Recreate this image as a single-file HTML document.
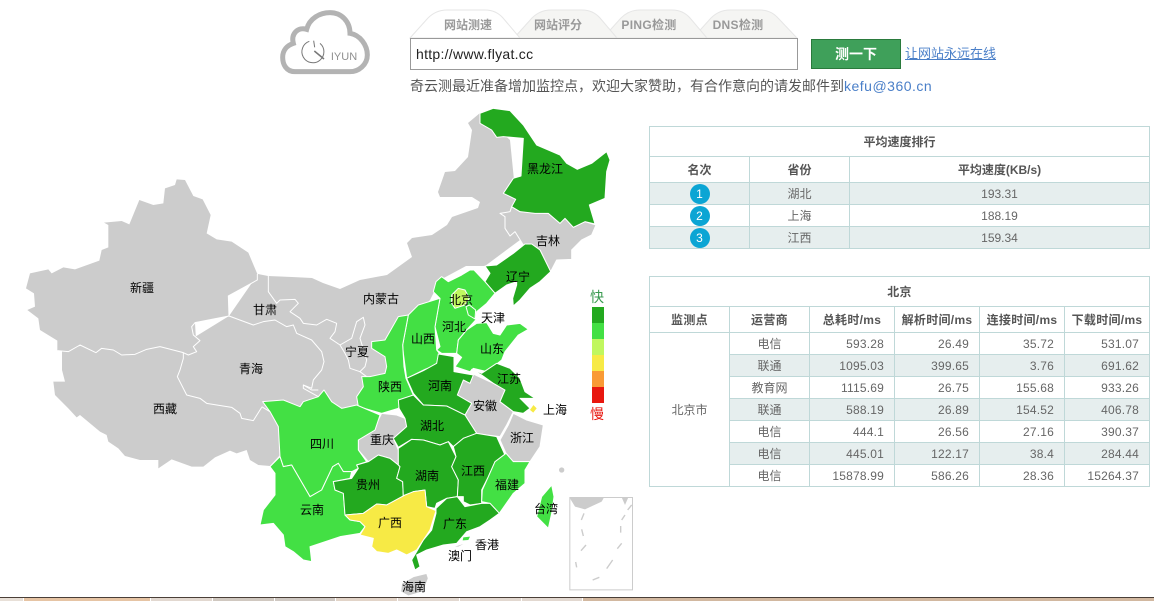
<!DOCTYPE html>
<html><head><meta charset="utf-8"><title>奇云测</title>
<style>
html,body{margin:0;padding:0;background:#fff;width:1154px;height:601px;overflow:hidden;position:relative}
body,td,th,div,a,span{font-family:"Liberation Sans","Noto Sans CJK SC",sans-serif}
.a{position:absolute;white-space:nowrap}
table{position:absolute;left:649px;border-collapse:collapse;table-layout:fixed;width:500px;font-size:12px;color:#666;text-align:center}
td,th{border:1px solid #bfd8d8;padding:0;line-height:16px;overflow:hidden;white-space:nowrap}
th{color:#555;font-weight:bold}
table.t2 th{letter-spacing:.3px}
tr.h30{height:30px}tr.h26{height:26px}tr.r{height:22px}
.s td.c,tr.s td{background:#e6eeee}
td.n{text-align:right;padding-right:10px;letter-spacing:.2px}
td.w{background:#fff!important}
.b{display:block;margin:0 auto;width:20px;height:20px;border-radius:50%;background:#0ba5d4;color:#fff;line-height:20px;font-size:12px}
svg{position:absolute;left:0;top:0}
svg polygon,svg polyline,svg path{vector-effect:non-scaling-stroke}
.p polygon{stroke:#fff;stroke-width:1;stroke-linejoin:round}
.l polyline{fill:none;stroke:#fff;stroke-width:1;stroke-linejoin:round}
.g{fill:#ccc}.d{fill:#23a91f}.m{fill:#43e044}.y{fill:#f7ea45}
text{font-family:"Liberation Sans","Noto Sans CJK SC",sans-serif;font-size:12px;fill:#000;text-anchor:middle}
</style></head><body>

<svg width="1154" height="601" viewBox="0 0 1154 601">
<!-- logo -->
<g transform="translate(270 0) scale(.33333)">
<path d="M75,215 C48,215 38,192 38,172 C38,150 52,136 70,130 C62,100 85,80 110,88 C118,55 150,38 180,38 C215,38 240,65 240,100 C270,105 292,135 292,165 C292,195 265,215 240,215 Z" fill="none" stroke="#b3b3b3" stroke-width="5"/>
<path d="M118,124 A33,33 0 1 0 150,130" fill="none" stroke="#777" stroke-width="1"/>
<path d="M131,122 L134,142" fill="none" stroke="#777" stroke-width="1"/>
<path d="M133,153 L162,177" stroke="#777" stroke-width="1.5" fill="none"/>
</g>
<text x="344" y="60" style="font-size:11px;fill:#8f8f8f">IYUN</text>

<!-- tabs -->
<g stroke="#e6e6e6" stroke-width="1" fill="#f5f5f3">
<path d="M693,38 L711,18 Q719,10 730,10 L760,10 Q771,10 778,18 L797,38 Z"/>
<path d="M603,38 L621,18 Q629,10 640,10 L672,10 Q683,10 690,18 L707,38 Z"/>
<path d="M514,38 L532,18 Q540,10 551,10 L582,10 Q593,10 600,18 L617,38 Z"/>
<path d="M410,38 L428,18 Q436,10 447,10 L485,10 Q496,10 503,18 L520,38 Z" fill="#fff"/>
</g>
<g style="font-weight:bold">
<text x="468" y="29" style="font-weight:bold;fill:#999">网站测速</text>
<text x="558" y="29" style="font-weight:bold;fill:#999">网站评分</text>
<text x="649" y="29" style="font-weight:bold;fill:#999;letter-spacing:.3px">PING检测</text>
<text x="738" y="29" style="font-weight:bold;fill:#999;letter-spacing:.3px">DNS检测</text>
</g>

<!-- base gray -->
<g class="p">
<polygon class="g" points="258,274 268,276 292,277 312,278 323,283 340,289 360,280 387,275 412,257 407,243 412,238 432,235 447,225 452,217 478,208 480,202 472,197 440,197 438,192 445,172 455,171 468,157 472,130 468,123 480,113 510,140 520,240 485,266 466,266 440,280 430,300 400,330 400,390 340,440 290,440 262,410 195,400 190,340 229,316" style="stroke:none"/>
<g transform="translate(40 380) scale(.33333)">
<polygon class="g" style="stroke:none" points="40,5 45,45 85,85 110,112 120,105 180,155 200,165 205,185 235,205 255,228 300,240 355,240 355,265 395,238 455,260 490,260 525,232 570,212 590,220 620,210 630,240 655,255 690,258 720,225 740,200 690,60 600,-120 200,-120 66,-90 66,-30 75,5"/>
</g>
<g transform="translate(20 170) scale(.33333)">
<polygon class="g" style="stroke:none" points="470,28 495,30 520,78 548,88 572,135 560,190 590,208 635,215 685,248 712,312 712,330 625,378 627,438 525,458 530,545 490,548 420,530 380,538 345,553 305,555 280,540 245,535 228,548 180,525 145,545 112,542 112,512 60,480 55,445 22,420 45,410 42,370 18,355 30,310 85,298 95,310 130,292 165,298 238,272 245,240 265,232 265,165 252,158 305,153 328,163 358,90 400,105 430,100 435,55 465,45"/>
</g>
</g>

<!-- west borders -->
<g class="l">
<g transform="translate(20 170) scale(.33333)">
<polyline points="112,542 145,545 180,525 228,548 245,535 280,540 305,555 345,553 380,538 420,530 490,548 505,555 530,545 520,530 540,512 520,495 515,470 525,458 627,438 625,378 712,330 712,312"/>
<polyline points="490,548 490,565 480,600 472,620 500,675 540,685 560,700 635,712 660,730 665,745 700,752 725,712"/>
<polyline points="627,438 700,465 730,455 765,450 800,470 820,465 830,490 875,510 905,545 912,575 905,600 880,630 875,655 850,645 850,655 895,680"/>
</g>
<g transform="translate(220 260) scale(.33333)">
<polyline points="145,47 145,95 170,130 180,120 225,118 235,130 210,155 240,175 250,190 290,195 320,178 350,190 345,215 330,235 360,255 395,235 410,185 430,172 435,195 420,235 440,300 435,320 420,335 390,325 385,300 375,280 360,255"/>
<polyline points="420,335 440,350 445,385"/>
</g>
<g transform="translate(250 350) scale(.33333)">
<polyline points="35,170 60,185"/>
<polyline points="160,105 185,120 205,120"/>
</g>
</g>

<!-- north east -->
<g class="p" transform="translate(340 100) scale(.33333)">
<polygon class="g" points="515,320 540,335 625,340 660,370 675,355 700,382 735,365 768,375 755,405 725,420 695,450 695,478 650,480 632,515 600,450 575,432 550,435 525,395 510,408 495,385 495,350 480,340 510,335"/>
<polygon class="d" points="420,40 460,25 510,32 550,75 590,135 660,165 680,190 712,208 755,190 800,155 810,180 800,215 795,295 748,315 765,372 735,365 700,382 675,355 660,370 625,340 585,340 540,335 515,320 527,298 490,280 520,235 543,228 550,115 490,110 470,112 455,90 420,70"/>
<polygon class="d" points="555,432 575,432 600,450 632,515 600,545 570,565 540,600 520,618 518,595 530,555 530,545 500,555 465,580 435,545 450,520 435,498 470,495 520,460"/>
</g>

<!-- north china -->
<g class="p" transform="translate(330 270) scale(.33333)">
<polygon class="m" points="318,35 335,20 355,35 395,15 420,0 432,0 465,35 495,70 470,100 440,125 437,150 410,180 385,210 380,250 335,250 320,240 330,230 315,170 330,85 310,65"/>
<polygon class="m" points="330,85 315,170 320,240 328,250 320,285 285,298 230,325 220,250 218,225 235,135 265,105"/>
<polygon class="m" points="235,135 218,225 222,290 228,325 250,375 215,395 205,415 155,430 85,410 80,380 100,350 95,320 120,320 165,310 170,290 165,260 125,235 125,215 165,210 205,140"/>
<polygon class="m" points="380,250 385,210 410,180 440,160 470,158 490,190 510,195 530,165 570,160 595,178 565,195 545,220 525,245 515,270 490,290 470,305 430,295 420,305 375,290 395,262"/>
<polygon class="m" points="408,110 415,135 435,147 437,120 418,105"/>
<polygon points="365,100 365,75 385,55 405,60 418,85 405,105 375,115" style="fill:#c0f75f"/>
</g>

<!-- south -->
<g class="p" transform="translate(250 350) scale(.33333)">
<polygon class="g" points="665,70 730,100 765,120 750,155 790,185 770,225 750,260 710,255 680,250 645,195 665,160 622,135 640,90 660,100"/>
<polygon class="g" points="790,190 830,210 880,225 870,290 840,335 790,335 768,310 750,270 775,225"/>
<polygon class="g" points="395,190 440,195 465,205 470,230 430,265 445,300 445,345 420,325 385,315 355,335 325,300 325,270 375,240 385,210"/>
<polygon class="m" points="38,155 100,150 150,170 160,155 205,140 222,120 245,155 275,175 320,165 390,195 375,240 325,270 325,300 350,335 320,345 325,355 305,365 280,365 265,340 248,350 215,420 180,440 125,345 100,350 90,320 85,230 60,185"/>
<polygon class="m" points="60,350 90,320 100,350 125,345 180,440 215,420 248,350 265,340 280,365 305,365 300,385 250,395 255,420 280,430 285,495 300,510 330,515 345,530 330,550 270,560 225,575 180,590 185,635 160,630 130,605 105,590 100,555 70,520 30,525 40,480 75,435 75,370"/>
<polygon class="d" points="250,395 305,385 325,355 320,345 355,335 385,315 420,325 445,345 450,350 440,385 458,395 460,440 410,465 380,462 340,490 285,495 280,430 255,420"/>
<polygon class="d" points="565,12 612,20 612,65 670,75 660,100 640,90 622,135 665,160 645,195 605,180 590,168 520,165 490,130 470,85 520,62 560,40"/>
<polygon class="d" points="445,150 490,135 520,165 590,168 645,195 680,250 640,265 610,290 595,275 570,285 520,270 485,268 445,292 430,265 470,230 465,205 447,175"/>
<polygon class="d" points="445,295 485,268 520,270 570,285 595,275 618,320 605,350 625,390 622,440 590,445 560,460 555,475 530,470 525,420 490,425 460,440 458,395 440,385 450,350 445,345"/>
<polygon class="d" points="610,290 640,265 680,250 710,255 740,260 768,322 735,335 715,380 695,420 695,460 660,465 640,455 640,440 622,440 625,390 605,350 618,320"/>
<polygon class="m" points="768,310 790,335 840,335 825,360 825,400 790,430 748,490 720,460 695,455 697,420 715,380 735,335"/>
<polygon class="d" points="665,58 695,70 740,40 780,55 810,85 825,125 855,145 810,145 840,175 820,190 790,185 750,155 765,120 730,100 695,75"/>
<polygon class="y" points="850,163 862,175 850,190 838,180"/>
<polygon class="d" points="558,475 590,445 622,440 645,470 695,460 720,460 748,490 720,510 690,530 650,545 620,580 580,585 530,600 500,615 510,650 495,660 485,630 500,605 520,570 545,540 558,490"/>
<polygon class="y" points="285,495 340,490 380,462 410,465 465,435 490,425 525,420 530,470 558,482 540,540 520,570 500,600 470,615 440,600 415,610 380,605 365,590 370,565 330,555 345,530 330,515 300,510"/>
<polygon class="m" points="905,405 912,440 905,490 895,535 860,500 875,440"/>
<polygon class="g" points="490,680 530,670 535,685 520,725 475,738 452,725 455,700"/>
<polygon class="m" style="stroke:none" points="640,562 660,560 655,570 638,571"/>
<polygon class="g" style="stroke:none" points="615,590 640,582 625,590"/>
<circle cx="935" cy="360" r="8" fill="#ccc"/>
</g>

<!-- legend -->
<rect x="592" y="307" width="12" height="16" fill="#23a91f"/>
<rect x="592" y="323" width="12" height="16" fill="#43e044"/>
<rect x="592" y="339" width="12" height="16" fill="#c0f75f"/>
<rect x="592" y="355" width="12" height="16" fill="#f7ea45"/>
<rect x="592" y="371" width="12" height="16" fill="#f99a35"/>
<rect x="592" y="387" width="12" height="16" fill="#e8170f"/>
<text x="597" y="302" style="font-size:14px;fill:#3a9a50">快</text>
<text x="597" y="419" style="font-size:14px;fill:#e8170f">慢</text>

<!-- inset -->
<g transform="translate(560 280) scale(.33333)">
<polygon points="30,655 45,680 75,688 125,665 132,652 30,652" fill="#ccc"/>
<polygon points="185,652 205,652 195,675" fill="#ccc"/>
<rect x="29.5" y="652.5" width="188" height="277" fill="none" stroke="#ccc" stroke-width="1" style="vector-effect:non-scaling-stroke"/>
<g stroke="#ccc" fill="none" style="stroke-width:1.4">
<path d="M72,700 L64,720 M65,748 L70,768 M78,795 L63,812 M47,846 L50,862 M118,892 L98,900 M158,840 L140,866 M185,790 L172,806 M182,738 L182,758 M195,705 L185,720 M215,675 L203,690"/>
</g>
</g>

<!-- labels -->
<text x="142" y="292">新疆</text><text x="265" y="314">甘肃</text><text x="251" y="373">青海</text><text x="165" y="413">西藏</text>
<text x="381" y="303">内蒙古</text><text x="357" y="356">宁夏</text><text x="545" y="173">黑龙江</text><text x="548" y="245">吉林</text>
<text x="518" y="281">辽宁</text><text x="461" y="304">北京</text><text x="493" y="322">天津</text><text x="454" y="331">河北</text>
<text x="423" y="343">山西</text><text x="492" y="353">山东</text><text x="390" y="391">陕西</text><text x="440" y="390">河南</text>
<text x="509" y="383">江苏</text><text x="485" y="410">安徽</text><text x="555" y="414">上海</text><text x="432" y="430">湖北</text>
<text x="382" y="444">重庆</text><text x="322" y="448">四川</text><text x="522" y="442">浙江</text><text x="473" y="475">江西</text>
<text x="427" y="480">湖南</text><text x="368" y="489">贵州</text><text x="507" y="489">福建</text><text x="312" y="514">云南</text>
<text x="390" y="527">广西</text><text x="455" y="528">广东</text><text x="546" y="513">台湾</text><text x="487" y="549">香港</text>
<text x="460" y="560">澳门</text><text x="414" y="591">海南</text>
</svg>

<!-- search row -->
<div class="a" style="left:410px;top:38px;width:386px;height:30px;border:1px solid #999;background:#fff;font-size:14px;line-height:30px;color:#222;text-indent:5px;letter-spacing:.28px">http://www.flyat.cc</div>
<div class="a" style="left:811px;top:39px;width:88px;height:28px;border:1px solid #2a7a3c;background:#3fa05a;color:#fff;font-size:14px;font-weight:bold;text-align:center;line-height:29px">测一下</div>
<a class="a" style="left:905px;top:45px;font-size:13px;line-height:18px;color:#4a7fc8;text-decoration:underline">让网站永远在线</a>
<div class="a" style="left:410px;top:76px;font-size:14px;line-height:20px;color:#555">奇云测最近准备增加监控点，欢迎大家赞助，有合作意向的请发邮件到<span style="color:#4a7fc8;letter-spacing:.5px">kefu@360.cn</span></div>

<!-- table 1 -->
<table style="top:126px">
<colgroup><col style="width:100px"><col style="width:100px"><col style="width:300px"></colgroup>
<tr class="h30"><th colspan="3">平均速度排行</th></tr>
<tr class="h26"><th>名次</th><th>省份</th><th>平均速度(KB/s)</th></tr>
<tr class="r s"><td><span class="b">1</span></td><td>湖北</td><td>193.31</td></tr>
<tr class="r"><td><span class="b">2</span></td><td>上海</td><td>188.19</td></tr>
<tr class="r s"><td><span class="b">3</span></td><td>江西</td><td>159.34</td></tr>
</table>

<!-- table 2 -->
<table class="t2" style="top:276px">
<colgroup><col style="width:80px"><col style="width:80px"><col style="width:85px"><col style="width:85px"><col style="width:85px"><col style="width:85px"></colgroup>
<tr class="h30"><th colspan="6">北京</th></tr>
<tr class="h26"><th>监测点</th><th>运营商</th><th>总耗时/ms</th><th>解析时间/ms</th><th>连接时间/ms</th><th>下载时间/ms</th></tr>
<tr class="r"><td rowspan="7" class="w">北京市</td><td>电信</td><td class="n">593.28</td><td class="n">26.49</td><td class="n">35.72</td><td class="n">531.07</td></tr>
<tr class="r s"><td>联通</td><td class="n">1095.03</td><td class="n">399.65</td><td class="n">3.76</td><td class="n">691.62</td></tr>
<tr class="r"><td>教育网</td><td class="n">1115.69</td><td class="n">26.75</td><td class="n">155.68</td><td class="n">933.26</td></tr>
<tr class="r s"><td>联通</td><td class="n">588.19</td><td class="n">26.89</td><td class="n">154.52</td><td class="n">406.78</td></tr>
<tr class="r"><td>电信</td><td class="n">444.1</td><td class="n">26.56</td><td class="n">27.16</td><td class="n">390.37</td></tr>
<tr class="r s"><td>电信</td><td class="n">445.01</td><td class="n">122.17</td><td class="n">38.4</td><td class="n">284.44</td></tr>
<tr class="r"><td>电信</td><td class="n">15878.99</td><td class="n">586.26</td><td class="n">28.36</td><td class="n">15264.37</td></tr>
</table>

<!-- bottom strip -->
<div class="a" style="left:0;top:597px;width:1154px;height:1px;background:#4a3f38"></div>
<div class="a" style="left:0;top:598px;width:23px;height:3px;background:#e8e0d8"></div>
<div class="a" style="left:24px;top:598px;width:126px;height:3px;background:#e6c4a4"></div>
<div class="a" style="left:151px;top:598px;width:61px;height:3px;background:#e2d8d0"></div>
<div class="a" style="left:213px;top:598px;width:61px;height:3px;background:#d0c8c0"></div>
<div class="a" style="left:275px;top:598px;width:60px;height:3px;background:#cfc8c2"></div>
<div class="a" style="left:336px;top:598px;width:61px;height:3px;background:#e2d4c8"></div>
<div class="a" style="left:398px;top:598px;width:61px;height:3px;background:#e2d8d0"></div>
<div class="a" style="left:460px;top:598px;width:61px;height:3px;background:#e2d8d0"></div>
<div class="a" style="left:522px;top:598px;width:60px;height:3px;background:#e2d8d0"></div>
<div class="a" style="left:583px;top:598px;width:571px;height:3px;background:#d2b8a0"></div>
</body></html>
